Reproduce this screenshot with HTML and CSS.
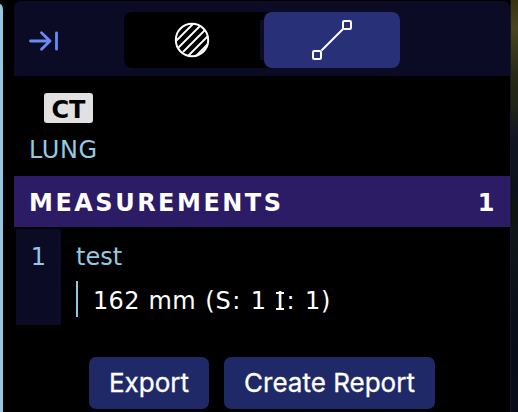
FILE: index.html
```html
<!DOCTYPE html>
<html lang="en">
<head>
<meta charset="utf-8">
<title>Measurements</title>
<link rel="stylesheet" href="styles.css">
</head>
<body>
<div class="viewer">
  <div class="viewport-edge"></div>
  <main class="panel">
    <header class="toolbar">
      <svg class="collapse" width="32" height="24" viewBox="0 0 32 24" fill="none" stroke="#688bf5" stroke-width="2.8" stroke-linecap="round" stroke-linejoin="round"><path d="M2.5 12H22M13.5 3.8L22 12L13.5 20.2M28.5 3.8V20.2"/></svg>
      <div class="tabs">
        <div class="tab">
          <svg width="36" height="36" viewBox="0 0 36 36" fill="none" stroke="#fff" stroke-width="2"><circle cx="18" cy="18" r="16.2"/><path d="M2.5 18.5L19 2M4.5 25.5L26.5 3.5M9 30L31 8M14 34L34 14M22 34L34 22" stroke-width="1.8"/></svg>
        </div>
        <div class="tab active">
          <svg width="40" height="42" viewBox="0 0 40 42" fill="none" stroke="#fff" stroke-width="2"><path d="M9.5 31.5L31 10"/><rect x="31" y="2" width="8" height="8" rx="1.2"/><rect x="1" y="32" width="8" height="8" rx="1.2"/></svg>
        </div>
      </div>
    </header>
    <section class="study">
      <div class="modality">CT</div>
      <div class="description">LUNG</div>
    </section>
    <div class="heading"><span>MEASUREMENTS</span><span>1</span></div>
    <section class="item">
      <div class="index">1</div>
      <div class="details">
        <div class="label">test</div>
        <div class="value">162 mm <span class="mark open">(</span>S<span class="mark">:</span> 1 <span class="serif-i">I</span><span class="mark">:</span> 1<span class="mark close">)</span></div>
      </div>
    </section>
    <footer class="actions">
      <button class="export">Export</button>
      <button class="report">Create Report</button>
    </footer>
  </main>
  <div class="scan"></div>
</div>
</body>
</html>
```
FILE: styles.css
```css
* { box-sizing: border-box; }
body {
  margin: 0;
  background: #000;
  color: #fff;
  font: 24px/30px Verdana, "DejaVu Sans", sans-serif;
  overflow: hidden;
}
.viewer { display: flex; width: 518px; height: 412px; }
.viewport-edge {
  width: 3px;
  height: 410px;
  margin-top: 4px;
  margin-right: 11px;
  background: #94c9e4;
  border-top-right-radius: 3px 6px;
}
.panel { width: 496px; padding-top: 1px; }
.toolbar {
  display: flex;
  height: 75px;
  padding: 11px 14px 0 13px;
  background: #0b0b25;
  border-radius: 7px 7px 0 0;
}
.collapse { margin: 17px 64px 0 1px; flex: none; }
.tabs {
  display: flex;
  width: 276px;
  height: 56px;
  background: linear-gradient(#0b0b25, #0b0b25) 136px 8px / 5px 40px no-repeat #000;
  border-radius: 8px;
}
.tab {
  display: flex;
  align-items: center;
  justify-content: center;
  width: 140px;
  padding-right: 4px;
}
.tab.active {
  width: 136px;
  padding: 0;
  background: #283177;
  border-radius: 8px;
}
.study { height: 100px; padding: 17px 15px 0; }
.modality {
  width: 49px;
  height: 30px;
  margin-left: 15px;
  background: #e1e1e1;
  border-radius: 3px;
  color: #000;
  font-weight: bold;
  line-height: 34px;
  text-align: center;
}
.description { margin-top: 12px; color: #94c9e4; letter-spacing: .6px; }
.heading {
  display: flex;
  justify-content: space-between;
  height: 51px;
  padding: 0 13px 0 15px;
  background: #2c1b65;
  font-weight: bold;
  line-height: 54px;
  letter-spacing: 2.5px;
}
.item { display: flex; height: 98px; padding: 2px 2px 0; }
.index {
  width: 45px;
  height: 96px;
  padding-top: 13px;
  background: #0b0b25;
  color: #94c9e4;
  text-align: center;
}
.details { padding: 13px 0 0 15px; }
.label { color: #94c9e4; }
.value {
  height: 36px;
  margin-top: 9px;
  padding-left: 15px;
  border-left: 2px solid #94c9e4;
  line-height: 40px;
  white-space: nowrap;
  letter-spacing: .3px;
  word-spacing: .034em;
}
.mark { display: inline-block; width: .454em; text-align: center; }
.serif-i {
  display: inline-block;
  width: .43em;
  letter-spacing: 0;
  text-align: center;
  background:
    linear-gradient(#fff, #fff) center 11px / 8px 2px no-repeat,
    linear-gradient(#fff, #fff) center 27px / 8px 2px no-repeat;
}
.actions { display: flex; gap: 15px; padding: 32px 0 0 75px; }
button {
  height: 52px;
  padding: 0;
  border: 0;
  border-radius: 7px;
  background: #202967;
  color: #fff;
  font: 26px/52px Inter, sans-serif;
  -webkit-text-stroke: .3px #fff;
}
.scan {
  width: 8px;
  height: 412px;
  background: linear-gradient(#37340c, #494519 28px, #262914 75px, #202419 105px, #111421 140px, #0d1219 190px, #10150f 210px, #10151a 240px, #080c17 340px, #090b19 412px);
  border-left: 1px solid #17172a;
}
.export { width: 120px; }
.report { width: 211px; }
```
